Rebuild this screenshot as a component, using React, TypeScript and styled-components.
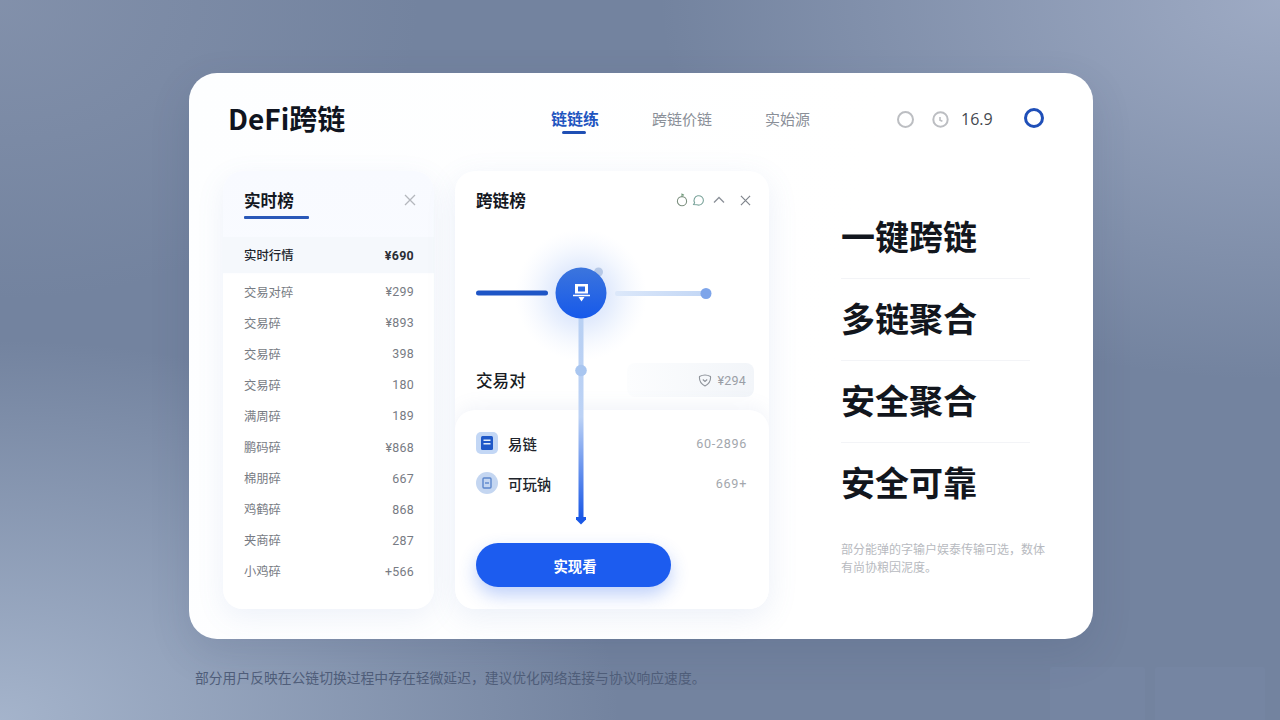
import React from 'react';
import styled, { createGlobalStyle } from 'styled-components';

const Global = createGlobalStyle`
  html, body { margin: 0; padding: 0; width: 1280px; height: 720px; overflow: hidden; }
  body { font-family: "Noto Sans CJK SC", "Noto Sans", sans-serif; }
`;

const Page = styled.div`
  width: 1280px; height: 720px; box-sizing: border-box; overflow: hidden;
  padding: 73px 0 0 189px;
  display: flex; flex-direction: column;
  background:
    radial-gradient(ellipse 620px 380px at 0% 100%, rgba(170,185,208,.9), rgba(170,185,208,0)),
    radial-gradient(ellipse 620px 380px at 100% 0%, rgba(165,177,202,.85), rgba(165,177,202,0)),
    radial-gradient(ellipse 420px 300px at 0% 0%, rgba(140,153,178,.6), rgba(140,153,178,0)),
    #73839f;
`;
const Card = styled.div`
  width: 903.5px; height: 565.5px; box-sizing: border-box; flex: none;
  padding: 0 34px;
  background: linear-gradient(100deg, #fdfeff, #ffffff 70%);
  border-radius: 28px;
  box-shadow: 0 14px 40px rgba(50,65,100,.14);
  display: flex; flex-direction: column;
`;
const Header = styled.header`
  height: 98px; flex: none; display: flex; align-items: center;
  padding: 0 0 6px 5px; box-sizing: border-box;
`;
const Logo = styled.div`
  font-size: 28px; font-weight: 700; color: #0f1420; width: 323px; line-height: 1; white-space: nowrap;
  margin-top: -2px;
`;
const Nav = styled.nav`display: flex; align-items: center; gap: 53px; width: 346px; margin-top: -2px;`;
const NavItem = styled.div<{ $on?: boolean }>`
  position: relative; line-height: 1; white-space: nowrap;
  font-size: ${p => (p.$on ? 16 : 15)}px;
  font-weight: ${p => (p.$on ? 600 : 400)};
  color: ${p => (p.$on ? '#1f55c0' : '#8a8f98')};
  ${p => p.$on && `&::after { content: ''; position: absolute; left: 11px; width: 24px; height: 3px; bottom: -8px; border-radius: 2px; background: #1f4fb4; }`}
`;
const Tools = styled.div`display: flex; align-items: center; color: #4a4f57;`;
const Ring = styled.div`
  width: 13px; height: 13px; border: 2px solid #bcbec2; border-radius: 50%; margin-right: 18px;
`;
const Version = styled.span`font: 400 16px "Open Sans", sans-serif; margin: 0 31px 0 12px; color: #44484f;`;
const BlueRing = styled.div`width: 14px; height: 14px; border: 3px solid #1f4fb8; border-radius: 50%; margin-top: -2px;`;

const Body = styled.div`flex: 1; display: flex; align-items: flex-start;`;
const ListPanel = styled.section`
  width: 211px; height: 438px; flex: none; border-radius: 20px; overflow: hidden;
  background: linear-gradient(#f8faff, #f9fbff 100px, #fff 104px);
  box-shadow: 0 8px 28px rgba(100,130,200,.1);
  display: flex; flex-direction: column;
`;
const ListHead = styled.div`
  height: 66px; flex: none; box-sizing: border-box; padding: 18px 18px 0 21px;
  display: flex; justify-content: space-between; align-items: flex-start;
`;
const PanelTitle = styled.h2`
  margin: 0; font-size: 16.6px; font-weight: 700; color: #14181f; line-height: 22px;
`;
const TitleLine = styled(PanelTitle)`
  padding-bottom: 6px; width: 65px; position: relative;
  &::after { content: ''; position: absolute; left: 0; top: 27px; width: 65px; height: 2.5px; border-radius: 1px; background: #2a58b8; }
`;
const CloseSlot = styled.div`margin-top: 5px; display: flex;`;
const HeadRow = styled.div`
  height: 36px; flex: none; display: flex; justify-content: space-between; align-items: center;
  padding: 0 20px 0 21px; background: #f5f8fc; font-size: 12.4px; font-weight: 500; color: #20242b;
`;
const RowList = styled.div`padding-top: 3px; display: flex; flex-direction: column;`;
const Row = styled.div`
  height: 31.1px; display: flex; justify-content: space-between; align-items: center;
  padding: 0 20px 0 21px; font-size: 12.3px; color: #777b83;
`;
const Price = styled.span`font: 400 12.4px "Roboto", sans-serif; letter-spacing: .3px; color: #777b83;`;
const LeadPrice = styled.span`font: 700 12.4px "Roboto", sans-serif; letter-spacing: .3px; color: #2a2e35;`;

const SwapPanel = styled.section`
  width: 314px; height: 438px; flex: none; margin-left: 21px; position: relative;
  border-radius: 20px; overflow: hidden; background: #fff;
  box-shadow: 0 8px 30px rgba(100,130,200,.12);
  display: flex; flex-direction: column;
`;
const SwapHead = styled.div`
  height: 58px; flex: none; box-sizing: border-box; padding: 18px 18px 0 21px;
  display: flex; justify-content: space-between; align-items: flex-start;
`;
const HeadIcons = styled.div`display: flex; align-items: center; gap: 4px; height: 22px; color: #8b9098;`;
const Gap = styled.span`width: 3px;`;
const Stage = styled.div`height: 127px; flex: none;`;
const PairRow = styled.div`
  height: 48px; flex: none; box-sizing: border-box; padding-left: 21px; padding-right: 15px;
  display: flex; justify-content: space-between; align-items: center;
`;
const PairLabel = styled.span`font-size: 16.6px; font-weight: 500; color: #181c23;`;
const Pill = styled.div`
  width: 127px; height: 34px; box-sizing: border-box; border-radius: 8px; padding-right: 8px;
  background: linear-gradient(90deg, #fcfdfe, #f2f5f9);
  display: flex; justify-content: flex-end; align-items: center; gap: 6px;
  font: 400 12.5px "Roboto", sans-serif; letter-spacing: .2px; color: #9a9ea6;
`;
const Sub = styled.div`
  flex: 1; border-radius: 20px 20px 0 0; margin-top: 6px;
  background: #fff; box-shadow: 0 -4px 18px rgba(110,135,190,.09);
  padding: 13px 22px 22px 21px; display: flex; flex-direction: column;
`;
const Asset = styled.div`height: 40px; display: flex; align-items: center; flex: none;`;
const AssetName = styled.span`font-size: 14.4px; font-weight: 500; color: #20242b; margin-left: 10px; flex: 1;`;
const AssetValue = styled.span`font: 400 12.6px "Roboto", sans-serif; letter-spacing: .7px; color: #a3a7ad;`;
const Chip = styled.div<{ $round?: boolean }>`
  width: 22px; height: 22px; border-radius: ${p => (p.$round ? '50%' : '5px')};
  background: ${p => (p.$round ? '#c4d6f1' : '#c3d7f5')};
  display: flex; align-items: center; justify-content: center; flex: none;
`;
const CTA = styled.button`
  width: 195px; height: 44px; margin-top: auto; border: 0; border-radius: 22px; padding: 0 0 0 3px;
  background: #1c5cef; color: #fff; font: 600 14.4px "Noto Sans CJK SC", sans-serif;
  box-shadow: 0 8px 18px rgba(40,100,240,.3);
`;
const Overlay = styled.svg`position: absolute; left: 0; top: 0; pointer-events: none;`;

const Features = styled.aside`
  margin-left: 72px; width: 189px; display: flex; flex-direction: column;
  padding-top: 26px;
`;
const Feature = styled.div`
  height: 82px; box-sizing: border-box; flex: none; display: flex; align-items: center;
  padding-bottom: 4px;
  font-size: 34px; font-weight: 700; color: #12161d; white-space: nowrap; line-height: 1;
  border-bottom: 1px solid #f3f4f7;
  &:last-of-type { border-bottom: 0; }
`;
const Note = styled.p`
  margin: 15px 0 0; width: 215px; font-size: 12px; line-height: 18px; color: #b7bac0;
`;
const Foot = styled.footer`
  flex: 1; display: flex; align-items: flex-start; padding-top: 28px;
`;
const FootText = styled.p`
  margin: 0 0 0 6px; width: 855px; font-size: 13.8px; line-height: 20px; color: #4f5d79; white-space: nowrap;
`;
const Ghost = styled.div<{ $w: number }>`
  width: ${p => p.$w}px; height: 60px; flex: none; margin-right: 10px;
  background: rgba(140,160,195,.1); border-radius: 2px;
`;

const X = ({ s = 12, c = '#a9adb3' }: { s?: number; c?: string }) => (
  <svg width={s} height={s} viewBox="0 0 12 12" fill="none" stroke={c} strokeWidth="1.3">
    <path d="M1 1l10 10M11 1L1 11" />
  </svg>
);

const rows: [string, string][] = [
  ['交易对碎', '¥299'], ['交易碎', '¥893'], ['交易碎', '398'], ['交易碎', '180'], ['满周碎', '189'],
  ['鹏码碎', '¥868'], ['棉朋碎', '667'], ['鸡鹤碎', '868'], ['夹商碎', '287'], ['小鸡碎', '+566'],
];

export default function App() {
  return (
    <Page>
      <Global />
      <Card>
        <Header>
          <Logo>DeFi跨链</Logo>
          <Nav>
            <NavItem $on>链链练</NavItem>
            <NavItem>跨链价链</NavItem>
            <NavItem>实始源</NavItem>
          </Nav>
          <Tools>
            <Ring />
            <svg width="17" height="17" viewBox="0 0 17 17" fill="none">
              <circle cx="8.5" cy="8.5" r="7.2" stroke="#bcbec2" strokeWidth="2" />
              <path d="M8 6v3.2l2.4 1" stroke="#bcbec2" strokeWidth="1.6" />
            </svg>
            <Version>16.9</Version>
            <BlueRing />
          </Tools>
        </Header>
        <Body>
          <ListPanel>
            <ListHead>
              <TitleLine>实时榜</TitleLine>
              <CloseSlot><X s={12} c="#b4b7bc" /></CloseSlot>
            </ListHead>
            <HeadRow><span>实时行情</span><LeadPrice>¥690</LeadPrice></HeadRow>
            <RowList>
              {rows.map(([n, v], i) => (
                <Row key={i}><span>{n}</span><Price>{v}</Price></Row>
              ))}
            </RowList>
          </ListPanel>

          <SwapPanel>
            <SwapHead>
              <PanelTitle>跨链榜</PanelTitle>
              <HeadIcons>
                <svg width="30" height="14" viewBox="0 0 30 14" fill="none">
                  <circle cx="7" cy="8.2" r="4.6" stroke="#7e9180" strokeWidth="1.1" />
                  <path d="M7 3.500V1.200l2 1" stroke="#6f9a7a" strokeWidth="1.1" />
                  <path d="M18.600 11.500l1-1.800a4.700 4.700 0 1 1 2.400 2.100z" stroke="#7aa39a" strokeWidth="1.1" />
                </svg>
                <svg width="20" height="12" viewBox="0 0 20 12" fill="none" stroke="#8b9098" strokeWidth="1.3">
                  <path d="M5 8.500l5-5 5 5" />
                </svg>
                <Gap />
                <X s={11} c="#80858c" />
              </HeadIcons>
            </SwapHead>
            <Stage />
            <PairRow>
              <PairLabel>交易对</PairLabel>
              <Pill>
                <svg width="14" height="14" viewBox="0 0 14 14" fill="none" stroke="#8f949b" strokeWidth="1.1">
                  <path d="M1.500 3.500Q7 .5 12.500 3.500C13 8 10 11.500 7 13 4 11.500 1 8 1.500 3.500z" />
                  <path d="M4.800 6.500L7 8.500l2.200-2" />
                </svg>
                <span>¥294</span>
              </Pill>
            </PairRow>
            <Sub>
              <Asset>
                <Chip>
                  <svg width="12" height="14" viewBox="0 0 12 14">
                    <rect width="12" height="14" rx="1.500" fill="#1f58c8" />
                    <rect x="2.500" y="3.500" width="7" height="1.500" fill="#e3edfb" />
                    <rect x="2.500" y="7" width="7" height="1.500" fill="#e3edfb" />
                  </svg>
                </Chip>
                <AssetName>易链</AssetName>
                <AssetValue>60-2896</AssetValue>
              </Asset>
              <Asset>
                <Chip $round>
                  <svg width="10" height="12" viewBox="0 0 10 12" fill="none" stroke="#5c86cc" strokeWidth="1.400">
                    <rect x="1" y="1" width="8" height="10" rx="1" />
                    <path d="M3 6h4" />
                  </svg>
                </Chip>
                <AssetName>可玩钠</AssetName>
                <AssetValue>669+</AssetValue>
              </Asset>
              <CTA>实现看</CTA>
            </Sub>
            <Overlay width="314" height="438" viewBox="0 0 314 438" fill="none">
              <defs>
                <radialGradient id="glow">
                  <stop offset="0.4" stopColor="#c4d6fa" stopOpacity=".5" />
                  <stop offset="0.6" stopColor="#dde8fc" stopOpacity=".5" />
                  <stop offset="1" stopColor="#eef3fe" stopOpacity="0" />
                </radialGradient>
                <linearGradient id="vline" x1="0" y1="0" x2="0" y2="1">
                  <stop offset="0" stopColor="#b8d0f3" />
                  <stop offset="0.5" stopColor="#bcd2f5" />
                  <stop offset="1" stopColor="#1a58e6" />
                </linearGradient>
                <linearGradient id="hub" x1="0" y1="0" x2="0" y2="1">
                  <stop offset="0" stopColor="#3c75dd" />
                  <stop offset="1" stopColor="#1659ea" />
                </linearGradient>
                <linearGradient id="bar" x1="0" y1="0" x2="1" y2="0">
                  <stop offset="0" stopColor="#dce8fa" />
                  <stop offset="1" stopColor="#c3d7f5" />
                </linearGradient>
              </defs>
              <circle cx="126" cy="124" r="66" fill="url(#glow)" />
              <rect x="21" y="119.500" width="72" height="5" rx="2.500" fill="#1e55c6" />
              <rect x="160" y="120" width="90" height="5" rx="2" fill="url(#bar)" />
              <circle cx="251" cy="122.500" r="5.500" fill="#7ea5ea" />
              <rect x="123.500" y="146" width="5" height="200" fill="url(#vline)" />
              <circle cx="126" cy="199.500" r="5.800" fill="#a9c6f0" />
              <path d="M121 346h10v2.500l-5 5-5-5z" fill="#1a58e6" />
              <circle cx="143.500" cy="101" r="4.500" fill="#b6c8e6" />
              <circle cx="126" cy="122" r="25.500" fill="url(#hub)" />
              <path d="M120 113h13v9.500h-13zM123 115.500v5h7v-5z" fill="#fff" fillRule="evenodd" />
              <path d="M118 124.500h17" stroke="#fff" strokeWidth="1.500" />
              <path d="M123.500 126h6l-3 4.500z" fill="#fff" />
            </Overlay>
          </SwapPanel>

          <Features>
            <Feature>一键跨链</Feature>
            <Feature>多链聚合</Feature>
            <Feature>安全聚合</Feature>
            <Feature>安全可靠</Feature>
            <Note>部分能弹的字输户娱泰传输可选，数体有尚协粮因泥度。</Note>
          </Features>
        </Body>
      </Card>
      <Foot>
        <FootText>部分用户反映在公链切换过程中存在轻微延迟，建议优化网络连接与协议响应速度。</FootText>
        <Ghost $w={95} />
        <Ghost $w={110} />
      </Foot>
    </Page>
  );
}
